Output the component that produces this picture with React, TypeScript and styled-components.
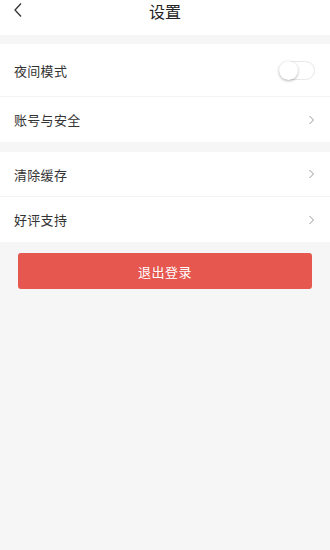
import styled, { createGlobalStyle } from 'styled-components';

const GlobalStyle = createGlobalStyle`
  html, body {
    margin: 0;
    padding: 0;
    background: #f6f6f6;
    font-family: "Noto Sans CJK SC", "Liberation Sans", sans-serif;
  }
`;

const Page = styled.div`
  width: 330px;
  min-height: 550px;
  background: #f6f6f6;
`;

const Header = styled.div`
  height: 35px;
  padding-top: 1px;
  box-sizing: border-box;
  background: #fff;
  display: flex;
  align-items: flex-start;
  justify-content: center;
  position: relative;
`;

const Title = styled.h1`
  margin: 0;
  font-size: 16px;
  font-weight: 400;
  line-height: 20px;
  color: #222;
`;

const BackButton = styled.button`
  position: absolute;
  left: 10px;
  top: 2px;
  border: none;
  background: none;
  padding: 0;
  width: 16px;
  height: 16px;
  display: flex;
  align-items: center;
  justify-content: center;
`;

const Group = styled.div<{ $gap: number }>`
  background: #fff;
  margin-top: ${(p) => p.$gap}px;
`;

const Row = styled.div<{ $height: number; $last?: boolean }>`
  height: ${(p) => p.$height}px;
  display: flex;
  align-items: center;
  justify-content: space-between;
  padding: 0 15px 0 14px;
  border-bottom: ${(p) => (p.$last ? 'none' : '1px solid #f3f3f3')};
  box-sizing: border-box;
`;

const Label = styled.span`
  font-size: 13px;
  color: #333;
  letter-spacing: 0.3px;
`;

const Toggle = styled.div`
  width: 36px;
  height: 19px;
  border-radius: 10px;
  border: 1px solid #e8e8e8;
  background: #fff;
  box-sizing: border-box;
  display: flex;
  align-items: center;
`;

const Knob = styled.div`
  width: 19px;
  height: 19px;
  margin-left: -1px;
  border-radius: 50%;
  background: #fff;
  box-shadow: 0 1px 3px rgba(0, 0, 0, 0.3);
`;

const LogoutButton = styled.button`
  display: block;
  margin: 11px 18px 0;
  width: 294px;
  height: 36px;
  border: none;
  border-radius: 3px;
  background: #e5574f;
  color: #fff;
  font-family: inherit;
  font-size: 13px;
  letter-spacing: 0.5px;
`;

const Chevron = () => (
  <svg width="7" height="10" viewBox="0 0 7 10">
    <path d="M1.5 1 L5.5 5 L1.5 9" fill="none" stroke="#999" strokeWidth="1" />
  </svg>
);

export default function App() {
  return (
    <Page>
      <GlobalStyle />
      <Header>
        <BackButton>
          <svg width="12" height="16" viewBox="0 0 12 16">
            <path d="M9 1.5 L3 8 L9 14.5" fill="none" stroke="#333" strokeWidth="1.3" />
          </svg>
        </BackButton>
        <Title>设置</Title>
      </Header>
      <Group $gap={9}>
        <Row $height={53}>
          <Label>夜间模式</Label>
          <Toggle>
            <Knob />
          </Toggle>
        </Row>
        <Row $height={45} $last>
          <Label>账号与安全</Label>
          <Chevron />
        </Row>
      </Group>
      <Group $gap={10}>
        <Row $height={45}>
          <Label>清除缓存</Label>
          <Chevron />
        </Row>
        <Row $height={45} $last>
          <Label>好评支持</Label>
          <Chevron />
        </Row>
      </Group>
      <LogoutButton>退出登录</LogoutButton>
    </Page>
  );
}
